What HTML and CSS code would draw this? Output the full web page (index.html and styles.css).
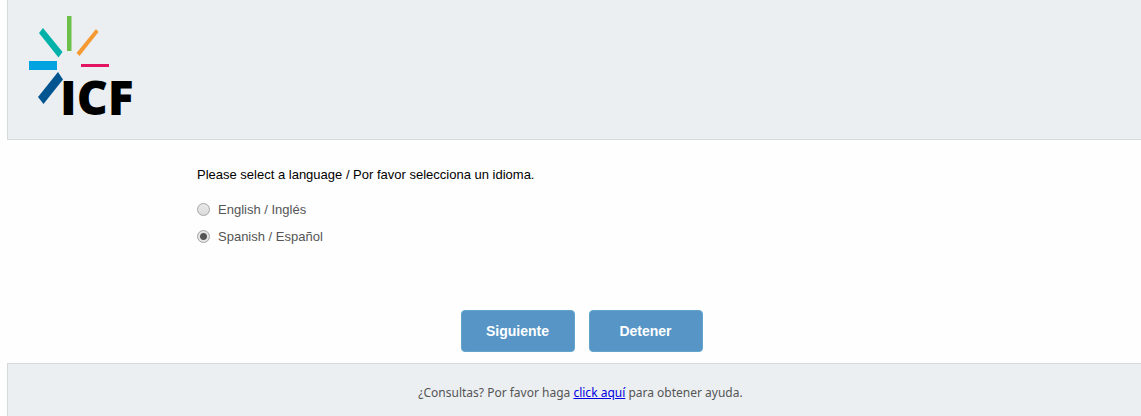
FILE: index.html
```html
<!DOCTYPE html>
<html lang="es">
<head>
  <meta charset="UTF-8" />
  <meta name="viewport" content="width=device-width, initial-scale=1" />
  <title>ICF</title>
  <link rel="stylesheet" href="styles.css">
</head>
<body>
  <header class="header">
    <svg class="logo" width="120" height="118" viewBox="0 0 120 118" role="img" aria-label="ICF">
      <path fill="#6cc04a" d="M38 0h4.500v35H38z" />
      <path fill="#f59a33" d="M67 13l2.500 3L50.500 40 47.500 37z" />
      <path fill="#00b1a9" d="M10 17l4-5 19.500 24-4 5.500z" />
      <path fill="#00a3e0" d="M0 45h28v9H0z" />
      <path fill="#e31563" d="M52 48h28v3H52z" />
      <path fill="#00548f" d="M29 56l5 7.500L14.500 88 9 81z" />
      <text class="logo-text" x="31" y="99">ICF</text>
    </svg>
  </header>

  <form id="languageForm">
    <fieldset class="question">
      <legend>Please select a language / Por favor selecciona un idioma.</legend>
      <div class="option">
        <input type="radio" id="english" name="language" value="en" />
        <label for="english">English / Inglés</label>
      </div>
      <div class="option">
        <input type="radio" id="spanish" name="language" value="es" checked />
        <label for="spanish">Spanish / Español</label>
      </div>
    </fieldset>

    <div class="buttons">
      <button type="submit">Siguiente</button>
      <button type="button">Detener</button>
    </div>
  </form>

  <footer class="footer">
    ¿Consultas? Por favor haga <a href="#">click aquí</a> para obtener ayuda.
  </footer>
</body>
</html>
```

FILE: styles.css
```css
body {
  margin: 0 0 0 7px;
  background-color: #fefefe;
  font-family: Arial, "Liberation Sans", sans-serif;
  font-size: 13px;
  line-height: 16px;
  color: #555;
}

/* Header */
.header {
  padding: 16px 21px 5px;
  background-color: #ebeff2;
  border-left: 1px solid #d5dadd;
  border-bottom: 1px solid #d5dadd;
}
.logo {
  display: block;
}
.logo-text {
  font-family: "Open Sans", sans-serif;
  font-size: 48px;
  font-weight: 800;
  fill: #000;
}

/* Question */
.question {
  margin: 0;
  padding: 27px 16px 0 190px;
  border: 0;
}
.question legend {
  float: left;
  width: 100%;
  padding: 0;
  margin-bottom: 13px;
  color: #000;
}
.option {
  clear: both;
  display: flex;
  align-items: center;
  gap: 8px;
  height: 27px;
}
.option input {
  appearance: none;
  box-sizing: border-box;
  width: 13px;
  height: 13px;
  margin: 0;
  border: 1px solid #a5a5a5;
  border-radius: 50%;
  background: linear-gradient(#e8e8e8, #dcdcdc);
}
.option input:checked {
  background: radial-gradient(circle, #555 0 3px, #e4e4e4 4px);
}

/* Buttons */
.buttons {
  display: flex;
  justify-content: center;
  gap: 14px;
  padding: 60px 0 11px 15px;
}
.buttons button {
  width: 114px;
  height: 42px;
  border: 1px solid #62a5cb;
  border-radius: 4px;
  background-color: #5695c6;
  color: #fff;
  font-family: inherit;
  font-size: 14px;
  font-weight: 700;
  cursor: pointer;
}

/* Footer */
.footer {
  padding: 21px 0 21px 12px;
  background-color: #ebeff2;
  border-left: 1px solid #d5dadd;
  border-top: 1px solid #d5dadd;
  font-family: Tahoma, "Noto Sans", sans-serif;
  font-size: 12px;
  text-align: center;
}
.footer a {
  color: #0000e0;
}
```
